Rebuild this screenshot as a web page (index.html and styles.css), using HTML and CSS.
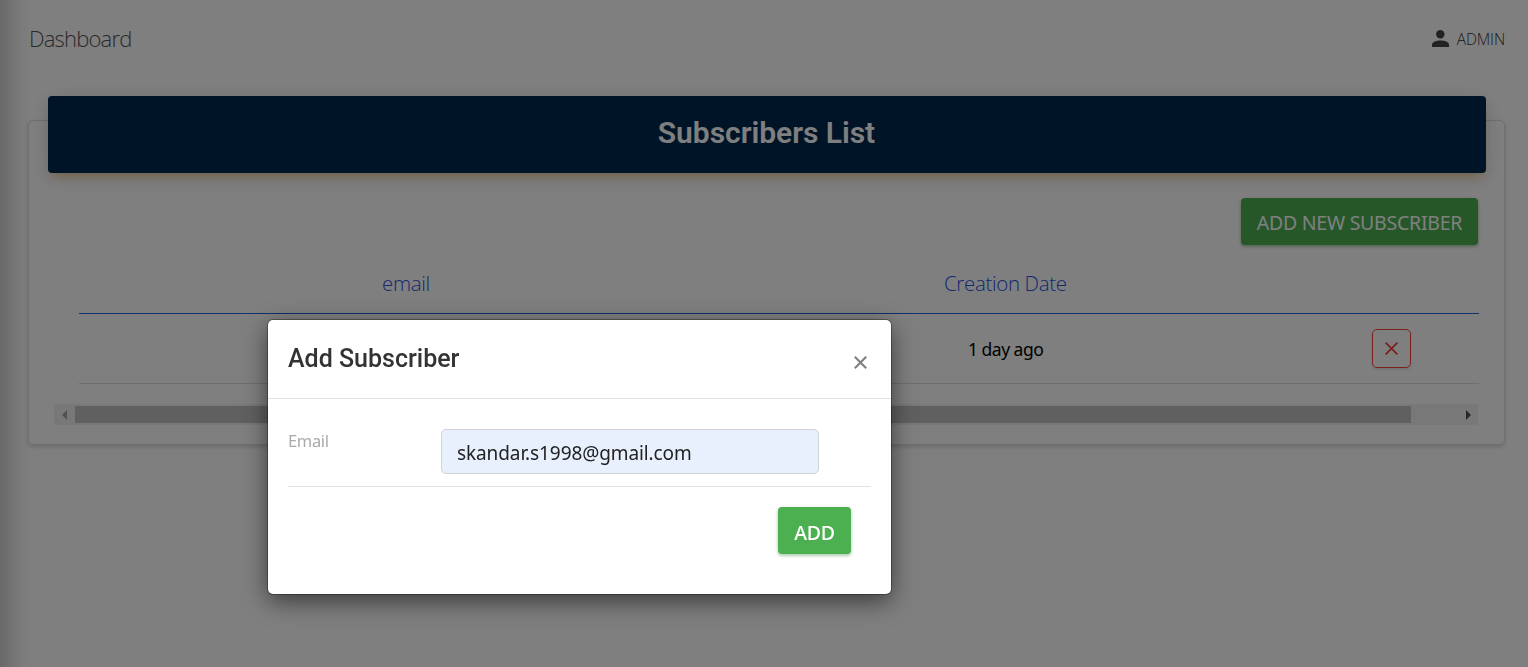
FILE: index.html
```html
<!DOCTYPE html>
<html lang="en">
<head>
<meta charset="utf-8">
<title>Dashboard</title>
<link rel="stylesheet" href="styles.css">
</head>
<body>
<div class="page">
  <header class="navbar">
    <span class="brand">Dashboard</span>
    <div class="user">
      <svg class="user-icon" viewBox="0 0 17 17"><circle cx="8.3" cy="4.2" r="4.2"/><path d="M0 17v-2.2C0 12 4.5 10.6 8.5 10.6S17 12 17 14.8V17z"/></svg>
      <span class="user-name">ADMIN</span>
    </div>
  </header>
  <main class="card">
    <div class="card-header"><h1 class="card-title">Subscribers List</h1></div>
    <div class="toolbar"><button class="btn btn-new"><span>ADD NEW SUBSCRIBER</span></button></div>
    <div class="table">
      <div class="row row-head"><span class="th th-email">email</span><span class="th th-date">Creation Date</span></div>
      <div class="row row-body">
        <span class="date">1 day ago</span>
        <button class="btn-delete" aria-label="Delete"><svg viewBox="0 0 13 13"><path d="M.6 .6l11.8 11.8M12.4 .6L.6 12.4"/></svg></button>
      </div>
    </div>
    <div class="scrollbar">
      <svg class="arrow arrow-left" viewBox="0 0 5 10"><path d="M5 0v10L0 5z"/></svg>
      <div class="thumb"></div>
      <svg class="arrow arrow-right" viewBox="0 0 5 10"><path d="M0 0v10l5-5z"/></svg>
    </div>
  </main>
</div>
<div class="backdrop"></div>
<section class="modal">
  <div class="modal-header">
    <h2 class="modal-title">Add Subscriber</h2>
    <svg class="close" viewBox="0 0 13 13"><path d="M.8 .8l11.4 11.4M12.2 .8L.8 12.2"/></svg>
  </div>
  <div class="modal-body">
    <div class="field">
      <label class="label">Email</label>
      <div class="input"><span>skandar.s1998@gmail.com</span></div>
    </div>
    <div class="actions"><button class="btn btn-add"><span>ADD</span></button></div>
  </div>
</section>
</body>
</html>
```
FILE: styles.css
```css
* { box-sizing: border-box; }
body { margin: 0; height: 667px; overflow: hidden; background: #fff; font-family: "Open Sans", "Noto Sans", sans-serif; color: #333; white-space: nowrap; }
h1, h2 { margin: 0; font-family: Roboto, sans-serif; }
button { font-family: inherit; padding: 0; margin: 0; }
.page { height: 667px; padding: 0 23px 0 28px; background: linear-gradient(90deg, #d2d2d2 0, #e0e0e0 8px, #f2f2f2 18px, #fff 32px); }
.navbar { height: 120px; display: flex; justify-content: space-between; align-items: flex-start; }
.brand { font-size: 22px; font-weight: 300; line-height: 30px; margin: 23px 0 0 1px; letter-spacing: -.8px; color: #555; }
.user { display: flex; align-items: center; gap: 8px; height: 22px; margin-top: 27px; }
.user-icon { width: 17px; height: 17px; fill: #444; }
.user-name { font-size: 15.5px; font-weight: 300; letter-spacing: -.1px; color: #333; padding-top: 1px; }
.card { height: 325px; border: 1px solid #dedede; border-radius: 5px; padding: 0 26px 0 25px; box-shadow: 0 2px 4px rgba(0,0,0,.16); }
.card-header { height: 77px; margin: -25px -8px 0 -6px; border-radius: 4px; background: #002850; box-shadow: 0 4px 20px rgba(0,0,0,.14), 0 7px 10px -3px rgba(255,152,0,.3); display: flex; justify-content: center; }
.card-title { font-size: 30px; line-height: 36px; margin: 19px 1px 0 0; font-weight: 600; letter-spacing: -.03px; color: #fff; }
.toolbar { height: 47px; margin-top: 25px; display: flex; justify-content: flex-end; }
.btn { height: 47px; border: 0; border-radius: 4px; background: #4caf50; color: #fff; font-family: "Noto Sans", sans-serif; font-size: 19.5px; box-shadow: 0 2px 3px rgba(76,175,80,.35), 0 1px 4px rgba(0,0,0,.15); display: flex; justify-content: center; align-items: center; padding-top: 2px; }
.btn-new { width: 237px; letter-spacing: -.25px; }
.table { margin: 10px -1px 0 25px; }
.row { display: flex; align-items: center; }
.row-head { height: 59px; border-bottom: 1px solid #1a64d8; padding: 0 0 2px 303px; }
.th { font-size: 20.5px; font-weight: 300; color: #2a50e0; line-height: 30px; letter-spacing: -.35px; }
.th-email { width: 562px; }
.row-body { height: 70px; border-bottom: 1px solid #dcdcdc; padding-left: 889px; }
.date { width: 404px; font-family: "Noto Sans", sans-serif; font-size: 17.5px; color: #000; letter-spacing: -.5px; padding-top: 1px; }
.btn-delete { width: 39px; height: 39px; border: 1px solid #f44336; border-radius: 5px; background: transparent; display: flex; align-items: center; justify-content: center; box-shadow: 0 2px 3px rgba(0,0,0,.1); }
.btn-delete svg { width: 13px; height: 13px; fill: none; stroke: #f44336; stroke-width: 1.8; }
.scrollbar { height: 21px; margin: 20px 0 0; background: #f1f1f1; display: flex; align-items: center; padding: 0 7px 0 8px; }
.arrow { width: 5px; height: 10px; flex: none; fill: #a3a3a3; }
.arrow-right { fill: #505050; margin-left: auto; }
.thumb { width: 1336px; height: 17px; margin-left: 8px; background: #c1c1c1; }
.backdrop { position: fixed; inset: 0; background: rgba(0,0,0,.5); }
.modal { position: absolute; left: 268px; top: 320px; width: 623px; height: 274px; background: #fff; border-radius: 5px; box-shadow: 0 0 0 1px rgba(0,0,0,.3), 0 7px 24px rgba(0,0,0,.55); }
.modal-header { height: 79px; padding: 0 24px 0 20px; border-bottom: 1px solid #dee2e6; display: flex; justify-content: space-between; }
.modal-title { font-size: 25px; line-height: 30px; font-weight: 500; margin-top: 24px; color: #333; }
.close { width: 13px; height: 13px; margin-top: 36px; fill: none; stroke: #808080; stroke-width: 2.1; }
.modal-body { padding: 30px 20px 0; }
.field { display: flex; height: 58px; border-bottom: 1px solid #dee2e6; }
.label { width: 153px; font-family: "Noto Sans", sans-serif; font-size: 16.5px; line-height: 23px; letter-spacing: -.35px; color: #aaa; }
.input { width: 378px; height: 45px; border: 1px solid #ced4da; border-radius: 5px; background: #e8effd; padding: 2px 15px 0; font-family: "Noto Sans", sans-serif; font-size: 19px; line-height: 42px; color: #222; letter-spacing: -.1px; }
.actions { display: flex; justify-content: flex-end; padding: 20px 20px 0 0; }
.btn-add { width: 73px; font-weight: 500; letter-spacing: -.3px; padding-top: 4px; }
```
